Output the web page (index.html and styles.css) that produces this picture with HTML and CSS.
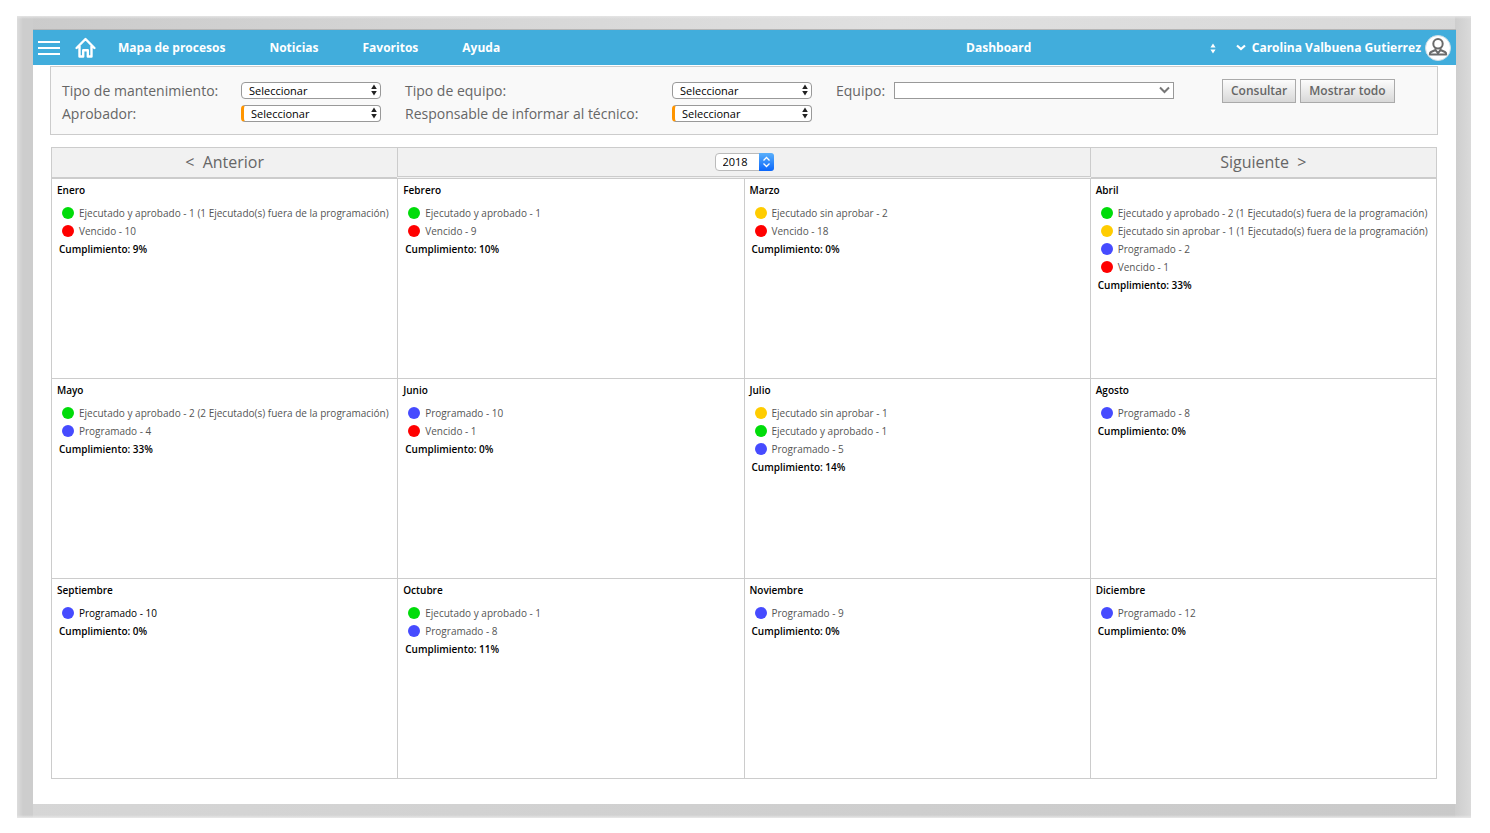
FILE: index.html
```html
<!DOCTYPE html>
<html lang="es">
<head>
<meta charset="utf-8">
<title>Dashboard</title>
<link rel="stylesheet" href="styles.css">
</head>
<body>
<svg class="defs" aria-hidden="true">
  <symbol id="updown" viewBox="0 0 6 12"><path d="M3 0.500L5.800 5H.2zM3 11.500L.2 7H5.800z"/></symbol>
</svg>
<div class="frame">
<div class="screen">
  <header class="topbar">
    <button class="icon-button menu" aria-label="Menú"><svg width="22" height="15" viewBox="0 0 22 15"><path d="M0 2h22M0 8h22M0 14h22" stroke="#fff" stroke-width="2"/></svg></button>
    <a class="home" href="#" aria-label="Inicio"><svg width="21" height="21" viewBox="0 0 21 21" fill="none" stroke="#fff" stroke-width="2.400"><path d="M1.600 11L10.500 2l8.900 9M4.500 9v10.500h3.700v-6.300h4.600v6.300h3.700V9" stroke-linejoin="round" stroke-linecap="round"/></svg></a>
    <nav class="nav">
      <a href="#">Mapa de procesos</a>
      <a href="#">Noticias</a>
      <a href="#">Favoritos</a>
      <a href="#">Ayuda</a>
    </nav>
    <span class="pick board"><select aria-label="Tablero"><option>Dashboard</option></select><svg class="arrows" width="6" height="11"><use href="#updown"/></svg></span>
    <button class="user">
      <svg width="10" height="7" viewBox="0 0 10 7"><path d="M1 1.500l4 3.500 4-3.500" fill="none" stroke="#fff" stroke-width="2.200"/></svg>
      <span class="name">Carolina Valbuena Gutierrez</span>
      <svg width="26" height="26" viewBox="0 0 26 26"><circle cx="13" cy="13" r="12.500" fill="#fff" stroke="#cfdde3"/><g fill="none" stroke="#6b6b6b" stroke-width="2"><ellipse cx="13" cy="8.800" rx="4.700" ry="4.800"/><path d="M10.500 13.300v1.700L6 17q-1.200.6-1.200 2.600h16.400q0-2-1.200-2.600l-4.500-2v-1.700M10.500 15.200L13 18l2.500-2.800" stroke-linejoin="round"/></g></svg>
    </button>
  </header>

  <form class="filters">
    <label for="mant">Tipo de mantenimiento:</label>
    <span class="pick"><select id="mant"><option>Seleccionar</option></select><svg class="arrows" width="6" height="12"><use href="#updown"/></svg></span>
    <label for="tipo">Tipo de equipo:</label>
    <span class="pick"><select id="tipo"><option>Seleccionar</option></select><svg class="arrows" width="6" height="12"><use href="#updown"/></svg></span>
    <label for="equipo">Equipo:</label>
    <span class="pick combo"><select id="equipo"><option></option></select><svg class="arrows" width="11" height="8" viewBox="0 0 11 8"><path d="M1 1.500L5.500 6 10 1.500" fill="none" stroke="#777" stroke-width="2"/></svg></span>
    <span class="actions"><button type="button">Consultar</button><button type="button">Mostrar todo</button></span>
    <label for="aprob">Aprobador:</label>
    <span class="pick required"><select id="aprob"><option>Seleccionar</option></select><svg class="arrows" width="6" height="12"><use href="#updown"/></svg></span>
    <label for="resp">Responsable de informar al técnico:</label>
    <span class="pick required"><select id="resp"><option>Seleccionar</option></select><svg class="arrows" width="6" height="12"><use href="#updown"/></svg></span>
  </form>

  <table class="calendar">
    <thead>
      <tr>
        <th><button>&lt;&nbsp; Anterior</button></th>
        <th colspan="2" class="year-cell"><span class="pick year"><select aria-label="Año"><option>2018</option></select><svg class="stepper" width="15" height="18" viewBox="0 0 15 18"><defs><linearGradient id="blue" x2="0" y2="1"><stop stop-color="#5ab0fb"/><stop offset="1" stop-color="#0a66fb"/></linearGradient></defs><path d="M0 0h12q3 0 3 3v12q0 3-3 3H0z" fill="url(#blue)"/><path d="M4.500 7.500l3-3 3 3M4.500 10.500l3 3 3-3" fill="none" stroke="#fff" stroke-width="1.300"/></svg></span></th>
        <th><button>Siguiente &nbsp;&gt;</button></th>
      </tr>
    </thead>
    <tbody>
      <tr>
        <td><h2>Enero</h2><ul><li class="green">Ejecutado y aprobado - 1 (1 Ejecutado(s) fuera de la programación)</li><li class="red">Vencido - 10</li></ul><p>Cumplimiento: 9%</p></td>
        <td><h2>Febrero</h2><ul><li class="green">Ejecutado y aprobado - 1</li><li class="red">Vencido - 9</li></ul><p>Cumplimiento: 10%</p></td>
        <td><h2>Marzo</h2><ul><li class="yellow">Ejecutado sin aprobar - 2</li><li class="red">Vencido - 18</li></ul><p>Cumplimiento: 0%</p></td>
        <td><h2>Abril</h2><ul><li class="green">Ejecutado y aprobado - 2 (1 Ejecutado(s) fuera de la programación)</li><li class="yellow">Ejecutado sin aprobar - 1 (1 Ejecutado(s) fuera de la programación)</li><li class="blue">Programado - 2</li><li class="red">Vencido - 1</li></ul><p>Cumplimiento: 33%</p></td>
      </tr>
      <tr>
        <td><h2>Mayo</h2><ul><li class="green">Ejecutado y aprobado - 2 (2 Ejecutado(s) fuera de la programación)</li><li class="blue">Programado - 4</li></ul><p>Cumplimiento: 33%</p></td>
        <td><h2>Junio</h2><ul><li class="blue">Programado - 10</li><li class="red">Vencido - 1</li></ul><p>Cumplimiento: 0%</p></td>
        <td><h2>Julio</h2><ul><li class="yellow">Ejecutado sin aprobar - 1</li><li class="green">Ejecutado y aprobado - 1</li><li class="blue">Programado - 5</li></ul><p>Cumplimiento: 14%</p></td>
        <td><h2>Agosto</h2><ul><li class="blue">Programado - 8</li></ul><p>Cumplimiento: 0%</p></td>
      </tr>
      <tr>
        <td><h2>Septiembre</h2><ul><li class="blue active">Programado - 10</li></ul><p>Cumplimiento: 0%</p></td>
        <td><h2>Octubre</h2><ul><li class="green">Ejecutado y aprobado - 1</li><li class="blue">Programado - 8</li></ul><p>Cumplimiento: 11%</p></td>
        <td><h2>Noviembre</h2><ul><li class="blue">Programado - 9</li></ul><p>Cumplimiento: 0%</p></td>
        <td><h2>Diciembre</h2><ul><li class="blue">Programado - 12</li></ul><p>Cumplimiento: 0%</p></td>
      </tr>
    </tbody>
  </table>
</div>
</div>
</body>
</html>
```
FILE: styles.css
```css
* { box-sizing: border-box; }
body {
  margin: 0;
  padding: 16px 19px 14px 17px;
  background: #fff;
  color: #666;
  font-family: "Trebuchet MS", "Open Sans", sans-serif;
}
.defs { display: none; }
button, select { font: inherit; color: inherit; margin: 0; }
button { cursor: pointer; }

.frame {
  padding: 13px 15px 14px 16px;
  background:
    linear-gradient(#e4e4e4, transparent 3px) top / 100% 3px no-repeat,
    linear-gradient(transparent, #e8e8e8) bottom / 100% 3px no-repeat,
    linear-gradient(90deg, #dcdcdc, #cdcdcd 6px) left / 16px 100% no-repeat,
    linear-gradient(90deg, #cdcdcd, #dadada) right / 16px 100% no-repeat,
    linear-gradient(90deg, #cbcbcb, #e0e0e0 60%, #d8d8d8) top / 100% 14px no-repeat,
    linear-gradient(90deg, #d6d6d6, #c9c9c9) bottom / 100% 15px no-repeat;
}
.screen { background: #fff; border-top: 1px solid #b5b5b5; padding-bottom: 25px; }

.topbar {
  display: flex;
  align-items: center;
  height: 35px;
  padding: 0 5px;
  background: #41addc;
  color: #fff;
  font-size: 12px;
  font-weight: 700;
}
.topbar a { color: inherit; text-decoration: none; }
.topbar svg { display: block; }
.icon-button { border: 0; padding: 0; background: none; }
.home { margin-left: 15px; }
.nav { display: flex; gap: 44px; margin-left: 22px; }
.pick { position: relative; display: block; }
.pick select { appearance: none; display: block; width: 100%; outline: 0; }
.arrows { position: absolute; right: 4px; top: 2px; fill: #222; }
.board { width: 438px; margin-left: auto; }
.board select { border: 0; padding: 0; background: none; text-align: center; text-align-last: center; }
.board .arrows { right: 2px; top: 4px; fill: #fff; }
.user {
  display: flex;
  align-items: center;
  margin-left: 18px;
  padding: 0;
  border: 0;
  background: none;
}
.name { margin: 0 4px 0 6px; }

.filters {
  display: grid;
  grid-template-columns: 179fr 164fr 267fr 164fr 58fr 328fr 215fr;
  grid-auto-rows: 23px;
  align-items: center;
  height: 69px;
  margin: 1px 18px 0 17px;
  padding: 12px 0 0 11px;
  border: 1px solid #ccc;
  background: #f9f9f9;
  font-size: 14px;
  white-space: nowrap;
}
.filters .pick { width: 140px; color: #000; font-size: 11px; }
.filters select {
  height: 17px;
  padding: 0 7px;
  border: 1px solid #999;
  border-radius: 4px;
  background: #fff;
  line-height: 14px;
}
.filters .required select { border-left: 3px solid #ff9500; }
.filters .combo { width: 280px; }
.filters .combo select { border-radius: 0; }
.combo .arrows { top: 4px; }
.actions { display: flex; gap: 4px; }
.actions button {
  height: 24px;
  padding: 0 8px;
  border: 1px solid #aaa;
  background: linear-gradient(#fcfcfc, #d8d8d8);
  font-size: 12px;
  font-weight: 600;
}

.calendar {
  width: calc(100% - 37px);
  margin: 12px 19px 0 18px;
  border-collapse: collapse;
  table-layout: fixed;
  color: #555;
  font-size: 10px;
}
.calendar th, .calendar td { border: 1px solid #ccc; padding: 0; }
.calendar th { height: 30px; background: #f1f1f1; border-bottom-width: 2px; font-weight: 400; }
.calendar th.year-cell { border-bottom: 3px double #ccc; }
.calendar th button { width: 100%; padding: 0; border: 0; background: none; color: #666; font-size: 16px; line-height: 24px; }
.year { width: 59px; margin: 0 auto; color: #000; font-size: 11px; }
.year select { height: 18px; padding: 0 7px; border: 1px solid #bbb; border-radius: 4px; background: #fff; line-height: 16px; }
.stepper { position: absolute; right: 0; top: 0; }
.calendar td { height: 200px; padding: 3px 2px 0 5px; vertical-align: top; white-space: nowrap; }
.calendar tbody tr:first-child td { height: 201px; }
.calendar h2 { margin: 0 0 6px; color: #000; font-size: 10px; font-weight: 600; line-height: 16px; }
.calendar ul { margin: 0; padding: 0 0 0 5px; list-style: none; }
.calendar li { display: flex; align-items: center; gap: 5px; height: 18px; line-height: 16px; }
.calendar li::before { content: ""; width: 12px; height: 12px; border-radius: 50%; background: currentColor; }
.calendar .green::before { background: #00dc0a; }
.calendar .red::before { background: #f00; }
.calendar .yellow::before { background: #ffcc00; }
.calendar .blue::before { background: #464bff; }
.calendar .active { color: #000; }
.calendar p { margin: 0 0 0 2px; color: #000; font-weight: 600; line-height: 18px; }
```
